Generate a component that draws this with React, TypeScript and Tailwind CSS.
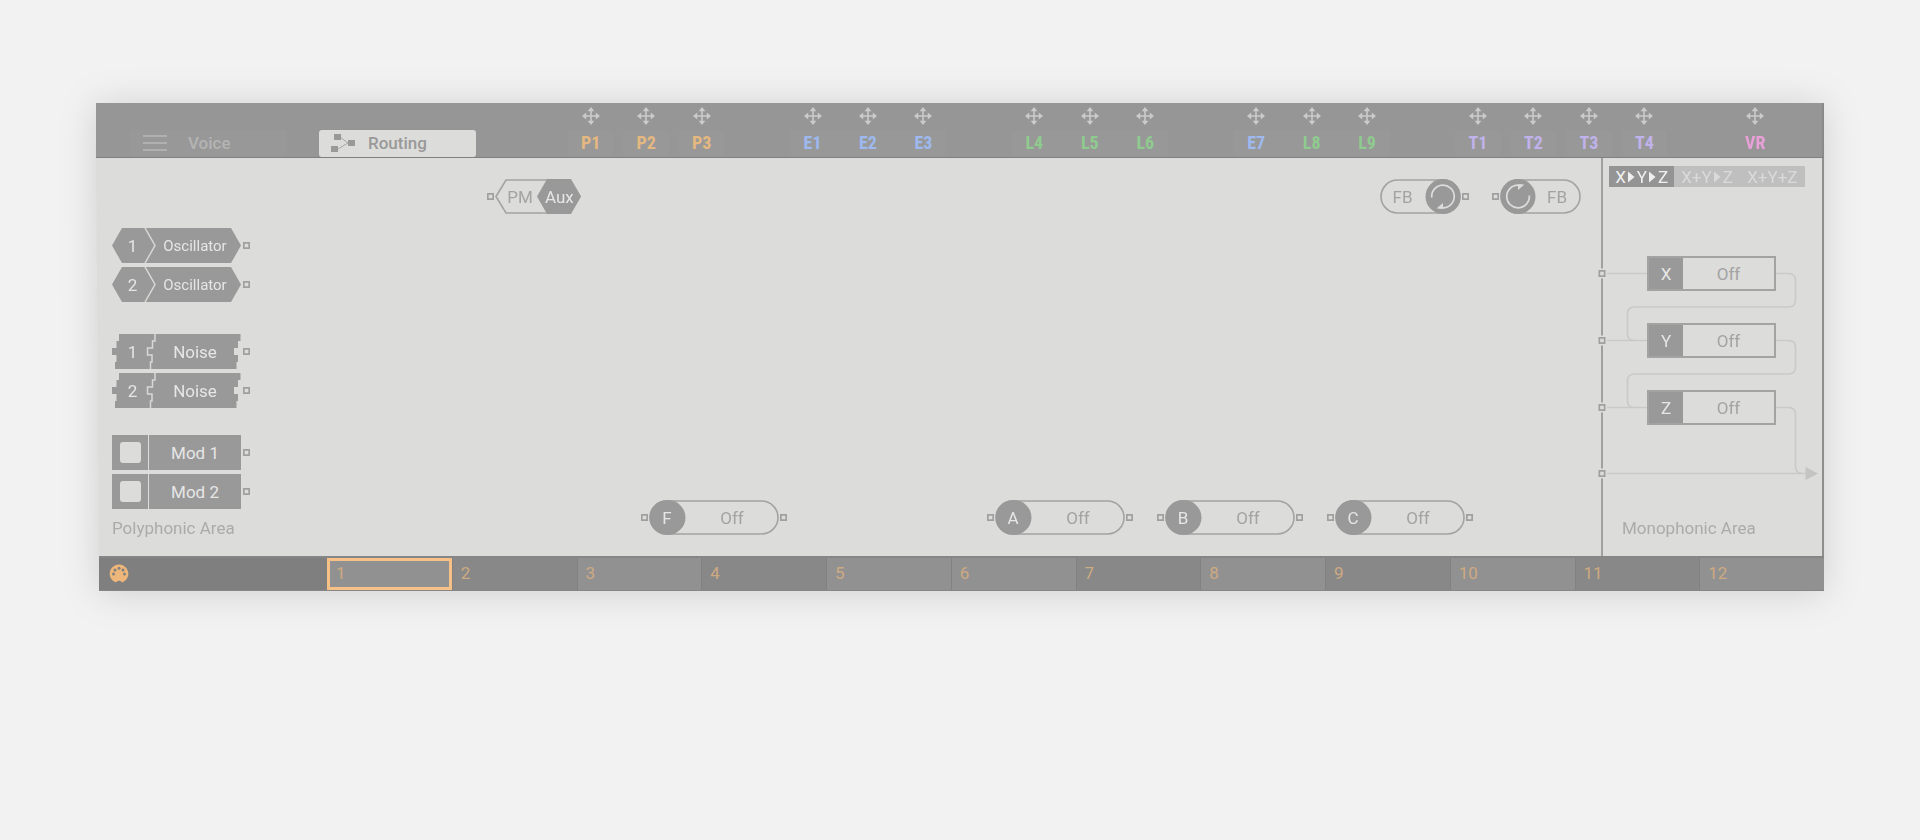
import React, { useState } from 'react';
import clsx from 'clsx';

interface ModSource {
  name: string;
  column: string;
  color: string;
  shape: string;
}

const single = 'mx-[5px]';
const first = 'ml-[5px] pr-[5px] rounded-r-none';
const middle = 'rounded-none';
const last = 'mr-[5px] pl-[5px] rounded-l-none';

const modSources: ModSource[] = [
  { name: 'P1', column: 'col-start-1', color: 'text-[#e5b880]', shape: single },
  { name: 'P2', column: 'col-start-2', color: 'text-[#e5b880]', shape: single },
  { name: 'P3', column: 'col-start-3', color: 'text-[#e5b880]', shape: single },
  { name: 'E1', column: 'col-start-5', color: 'text-[#9db9f0]', shape: first },
  { name: 'E2', column: 'col-start-6', color: 'text-[#9db9f0]', shape: middle },
  { name: 'E3', column: 'col-start-7', color: 'text-[#9db9f0]', shape: last },
  { name: 'L4', column: 'col-start-9', color: 'text-[#8fcb8f]', shape: first },
  { name: 'L5', column: 'col-start-10', color: 'text-[#8fcb8f]', shape: middle },
  { name: 'L6', column: 'col-start-11', color: 'text-[#8fcb8f]', shape: last },
  { name: 'E7', column: 'col-start-[13]', color: 'text-[#9db9f0]', shape: first },
  { name: 'L8', column: 'col-start-[14]', color: 'text-[#8fcb8f]', shape: middle },
  { name: 'L9', column: 'col-start-[15]', color: 'text-[#8fcb8f]', shape: last },
  { name: 'T1', column: 'col-start-[17]', color: 'text-[#c0b2ea]', shape: single },
  { name: 'T2', column: 'col-start-[18]', color: 'text-[#c0b2ea]', shape: single },
  { name: 'T3', column: 'col-start-[19]', color: 'text-[#c0b2ea]', shape: single },
  { name: 'T4', column: 'col-start-[20]', color: 'text-[#c0b2ea]', shape: single },
  { name: 'VR', column: 'col-start-[22]', color: 'text-[#e9a0d8]', shape: 'bg-transparent' },
];

const blackKeys = [2, 4, 7, 9, 11];

function Port() {
  return (
    <svg viewBox="0 0 7 7" className="size-[7px] shrink-0">
      <path d="M0.850 0.850h5.300v5.300h-5.300z" fill="none" stroke="#a0a0a0" strokeWidth="1.700" />
    </svg>
  );
}

function MoveIcon() {
  return (
    <svg viewBox="0 0 18 18" className="size-[18px]" fill="#cbcbcb">
      <path d="M9 2v14M2 9h14" stroke="#cbcbcb" strokeWidth="1.600" />
      <path d="M9 0l3.400 4.200H5.600zM9 18l3.400-4.200H5.600zM0 9l4.200-3.400v6.800zM18 9l-4.200-3.400v6.800z" />
    </svg>
  );
}

function RoutingIcon() {
  return (
    <svg viewBox="0 0 24 20" className="h-[20px] w-[24px]" fill="#999">
      <path d="M9 4l8 6-10 6" fill="none" stroke="#a8a8a8" strokeWidth="1" />
      <path d="M3 1h7v6H3zM0 13h7v6H0zM17 7h7v6h-7z" />
    </svg>
  );
}

function Triangle() {
  return (
    <svg viewBox="0 0 7 12" className="h-[12px] w-[7px]" fill="currentColor">
      <path d="M0 0.500l6.500 5.500L0 11.500z" />
    </svg>
  );
}

function MidiIcon() {
  return (
    <svg viewBox="0 0 20 20" className="size-[20px]">
      <path d="M7 18.600a9.300 9.300 0 1 1 6 0q-.6-1.900-3-1.900t-3 1.900z" fill="#edb67b" />
      <g fill="#85807c">
        <circle cx="4.500" cy="10" r="1.500" />
        <circle cx="6" cy="5.900" r="1.500" />
        <circle cx="10" cy="4.300" r="1.500" />
        <circle cx="14" cy="5.900" r="1.500" />
        <circle cx="15.500" cy="10" r="1.500" />
      </g>
    </svg>
  );
}

function OscillatorShape() {
  return (
    <svg viewBox="0 0 129 35" className="absolute inset-0 size-full">
      <path d="M0 17.500L10 0h109l10 17.500L119 35H10z" fill="#999" />
      <path d="M33 0l10 17.500L33 35" fill="none" stroke="#d8d8d7" strokeWidth="1.500" />
    </svg>
  );
}

function NoiseShape() {
  return (
    <svg viewBox="0 0 129 35" className="absolute inset-0 size-full">
      <path
        d="M7 0H128.500V7H126V14H122V21H126V28H124.500V35H3V28H4.500V21H0V14H4.500V7H7z"
        fill="#999"
      />
      <path
        d="M43 0V7H40.500V14H35.500V21H40V28H38.500V35"
        fill="none"
        stroke="#d8d8d7"
        strokeWidth="1.500"
      />
    </svg>
  );
}

interface SourceNodeProps {
  index: number;
  label: string;
  shape: React.ReactNode;
  small?: boolean;
}

function SourceNode({ index, label, shape, small }: SourceNodeProps) {
  return (
    <div className="flex items-center gap-[2px]">
      <button className="relative flex h-[35px] w-[129px] items-center pr-[4px] text-[#e6e6e6]">
        {shape}
        <span className="relative w-[41px] text-center">{index}</span>
        <span className={clsx('relative flex-1 text-center', small && 'text-[15px]')}>{label}</span>
      </button>
      <Port />
    </div>
  );
}

function ModNode({ index }: { index: number }) {
  return (
    <div className="flex items-center gap-[2px]">
      <div className="flex h-[35px] w-[129px] items-stretch gap-px">
        <div className="flex w-[36px] items-center justify-center bg-[#999]">
          <input
            id={`mod-${index}`}
            type="checkbox"
            className="size-[21px] appearance-none rounded-[3px] bg-[#dcdcda]"
          />
        </div>
        <label
          htmlFor={`mod-${index}`}
          className="flex flex-1 items-center justify-center bg-[#999] text-[#e6e6e6]"
        >
          Mod {index}
        </label>
      </div>
      <Port />
    </div>
  );
}

function FilterNode({ letter }: { letter: string }) {
  return (
    <div className="flex items-center gap-px">
      <Port />
      <button className="relative flex h-[35px] w-[130px] items-center text-[#a3a3a3]">
        <svg viewBox="0 0 130 35" className="absolute inset-0 size-full">
          <rect x="1" y="1" width="128" height="33" rx="16.500" fill="none" stroke="#a3a3a3" strokeWidth="1.600" />
          <ellipse cx="18.500" cy="17.500" rx="18" ry="17.500" fill="#999" />
        </svg>
        <span className="relative w-[36px] text-center text-[#e6e6e6]">{letter}</span>
        <span className="relative flex-1 text-center">Off</span>
      </button>
      <Port />
    </div>
  );
}

function AuxNode() {
  return (
    <div className="flex items-center gap-px">
      <Port />
      <button className="relative flex h-[35px] w-[86px] items-center">
        <svg viewBox="0 0 86 35" className="absolute inset-0 size-full">
          <path d="M1 17.500L11 1h64l10 16.500L75 34H11z" fill="none" stroke="#a3a3a3" strokeWidth="1.600" />
          <path d="M42 17.500L52 0h24l10 17.500L76 35H52z" fill="#999" />
        </svg>
        <span className="relative w-[50px] text-center text-[#a3a3a3]">PM</span>
        <span className="relative w-[28px] text-center text-[#e6e6e6]">Aux</span>
      </button>
    </div>
  );
}

function FeedbackNode({ side }: { side: 'in' | 'out' }) {
  const isOut = side === 'out';
  return (
    <div className={clsx('flex items-center gap-px', !isOut && 'flex-row-reverse')}>
      <button
        className={clsx(
          'relative flex h-[35px] w-[81px] items-center text-[#a3a3a3]',
          isOut ? 'pr-[36px]' : 'pl-[33px]'
        )}
      >
        {isOut ? (
          <svg viewBox="0 0 81 35" className="absolute inset-0 size-full">
            <rect x="1" y="1" width="79" height="33" rx="16.500" fill="none" stroke="#a3a3a3" strokeWidth="1.600" />
            <circle cx="63" cy="17.500" r="17.500" fill="#999" />
            <path d="M51.700 18.500a11.300 11.300 0 1 1 11.300 10.300h-4" fill="none" stroke="#dcdcda" strokeWidth="1.700" />
            <path d="M63 24l-6.500 5.500h6.500z" fill="#dcdcda" />
          </svg>
        ) : (
          <svg viewBox="0 0 81 35" className="absolute inset-0 size-full">
            <rect x="1" y="1" width="79" height="33" rx="16.500" fill="none" stroke="#a3a3a3" strokeWidth="1.600" />
            <circle cx="18" cy="17.500" r="17.500" fill="#999" />
            <path d="M29.300 16.500a11.300 11.300 0 1 1-11.300-10.300h4" fill="none" stroke="#dcdcda" strokeWidth="1.700" />
            <path d="M18 11l6.500-5.500h-6.500z" fill="#dcdcda" />
          </svg>
        )}
        <span className="relative flex-1 text-center">FB</span>
      </button>
      <Port />
    </div>
  );
}

// Serial connections between the X, Y and Z effects and the main output
function Wiring() {
  return (
    <svg viewBox="0 0 224 230" className="absolute top-0 -left-[5px] h-[230px] w-[224px]" fill="none">
      <g stroke="#c9c9c8" strokeWidth="1.600">
        <path d="M9 17.500h40M9 84.500h40M9 151.500h40M9 217.500h200" />
        <path d="M177 17.500h13.500q7 0 7 7v19.500q0 7-7 7h-154q-7 0-7 7v19.500q0 7 6 7" />
        <path d="M177 84.500h13.500q7 0 7 7v19.500q0 7-7 7h-154q-7 0-7 7v19.500q0 7 6 7" />
        <path d="M177 151.500h13.500q7 0 7 7v52q0 7 7 7" />
      </g>
      <path d="M207.500 211l12.500 6.500-12.500 6.500z" fill="#c4c4c4" />
      {[17.5, 84.5, 151.5, 217.5].map((y) => (
        <g key={y}>
          <path d={`M-1 ${y - 5}h10v10h-10z`} fill="#dcdcda" />
          <path d={`M1.350 ${y - 2.65}h5.300v5.300h-5.300z`} stroke="#a0a0a0" strokeWidth="1.700" />
        </g>
      ))}
    </svg>
  );
}

const modes = [
  { id: 'serial', parts: ['X', '>', 'Y', '>', 'Z'] },
  { id: 'mixed', parts: ['X+Y', '>', 'Z'] },
  { id: 'parallel', parts: ['X+Y+Z'] },
];

export default function App() {
  const [mode, setMode] = useState('serial');
  const [selectedKey, setSelectedKey] = useState(1);

  return (
    <div className="min-h-screen bg-[#f2f2f2] px-24 pt-[103px] font-['Roboto','Liberation_Sans',sans-serif] text-[17px] leading-6">
      <div className="drop-shadow-[0_2px_18px_rgba(0,0,0,0.14)]">
        {/* Header */}
        <header className="flex items-end border-r-2 border-b border-r-[#8a8a8a] border-b-[#808080] bg-[#969696] pl-[34px]">
          <nav className="flex gap-8 font-medium">
            <button className="flex h-[27px] w-[157px] items-center rounded-[3px] bg-[#989898] pb-px pl-[13px] text-[#b4b4b4]">
              <svg viewBox="0 0 24 18" className="h-[18px] w-[24px]" stroke="#b8b8b8" strokeWidth="1.500">
                <path d="M0 2h24M0 9h24M0 16h24" />
              </svg>
              <span className="ml-[21px]">Voice</span>
            </button>
            <button className="flex h-[27px] w-[157px] items-center rounded-[3px] bg-[#dcdcda] pb-px pl-[12px] text-[#999]">
              <RoutingIcon />
              <span className="ml-[13px]">Routing</span>
            </button>
          </nav>
          <div className="mr-[39px] ml-[87px] grid flex-1 grid-cols-22 pt-[4px]">
            {modSources.map((source) => (
              <button key={source.name} className={clsx('row-start-1 flex flex-col gap-[5px]', source.column)}>
                <span className="self-center">
                  <MoveIcon />
                </span>
                <span
                  className={clsx(
                    "flex h-[27px] items-center justify-center self-stretch rounded-[3px] pb-[2px] font-['Roboto_Condensed','Liberation_Sans_Narrow','Roboto',sans-serif] text-[18px] font-bold",
                    source.shape !== 'bg-transparent' && 'bg-[#989898]',
                    source.shape,
                    source.color
                  )}
                >
                  {source.name}
                </span>
              </button>
            ))}
          </div>
        </header>

        {/* Routing canvas */}
        <main className="flex border-r-2 border-[#8e8e8e] bg-[#dcdcda] [clip-path:polygon(0_0,100%_0,100%_100%,3px_100%)]">
          <section className="flex flex-col pt-[70px] pb-4 pl-4">
            <div className="flex flex-col gap-1">
              <SourceNode index={1} label="Oscillator" shape={<OscillatorShape />} small />
              <SourceNode index={2} label="Oscillator" shape={<OscillatorShape />} small />
            </div>
            <div className="mt-8 flex flex-col gap-1">
              <SourceNode index={1} label="Noise" shape={<NoiseShape />} />
              <SourceNode index={2} label="Noise" shape={<NoiseShape />} />
            </div>
            <div className="mt-[27px] flex flex-col gap-1">
              <ModNode index={1} />
              <ModNode index={2} />
            </div>
            <p className="mt-[7px] text-[#ababab]">Polyphonic Area</p>
          </section>

          <section className="flex flex-1 flex-col justify-between border-r-2 border-[#a0a0a0] py-[21px]">
            <div className="flex justify-between pr-[20px] pl-[237px]">
              <AuxNode />
              <div className="flex gap-[23px]">
                <FeedbackNode side="out" />
                <FeedbackNode side="in" />
              </div>
            </div>
            <div className="flex justify-between pr-[128px] pl-[391px]">
              <FilterNode letter="F" />
              <div className="flex gap-6">
                <FilterNode letter="A" />
                <FilterNode letter="B" />
                <FilterNode letter="C" />
              </div>
            </div>
          </section>

          <section className="flex w-[219px] flex-col pt-[8px] pb-4">
            <div className="ml-[6px] flex w-[196px] bg-[#bfbfbf]">
              {modes.map((item) => (
                <button
                  key={item.id}
                  onClick={() => setMode(item.id)}
                  className={clsx(
                    'flex h-[21px] flex-1 items-center justify-center gap-[2px]',
                    mode === item.id ? 'bg-[#949494] text-[#f0f0f0]' : 'text-[#dadada]'
                  )}
                >
                  {item.parts.map((part, i) => (part === '>' ? <Triangle key={i} /> : <span key={i}>{part}</span>))}
                </button>
              ))}
            </div>
            <div className="relative mt-[69px] flex flex-col gap-8 pr-[46px] pl-[44px]">
              <Wiring />
              {['X', 'Y', 'Z'].map((letter) => (
                <button key={letter} className="relative flex h-[35px] items-stretch border-2 border-[#a3a3a3] bg-[#dcdcda]">
                  <span className="flex w-[34px] items-center justify-center bg-[#999] text-[#e6e6e6]">{letter}</span>
                  <span className="flex flex-1 items-center justify-center text-[#a3a3a3]">Off</span>
                </button>
              ))}
            </div>
            <p className="mt-auto pl-[19px] text-[#ababab]">Monophonic Area</p>
          </section>
        </main>

        {/* Key strip */}
        <footer className="ml-[3px] flex h-[35px] border-t-2 border-b border-[#868686] bg-[#7f7f7f]">
          <button className="flex w-[228px] items-center pb-px pl-[10px]" aria-label="MIDI">
            <MidiIcon />
          </button>
          <div className="grid flex-1 grid-cols-12">
            {Array.from({ length: 12 }, (_, i) => i + 1).map((key) => (
              <button
                key={key}
                onClick={() => setSelectedKey(key)}
                className={clsx(
                  'flex items-center pb-[2px] text-[#ceaa82]',
                  blackKeys.includes(key) ? 'bg-[#888]' : 'bg-[#919191]',
                  selectedKey === key ? 'border-3 border-[#f6c087] pl-[6px]' : 'border-l border-[#818181] pl-[8px]'
                )}
              >
                {key}
              </button>
            ))}
          </div>
        </footer>
      </div>
    </div>
  );
}
